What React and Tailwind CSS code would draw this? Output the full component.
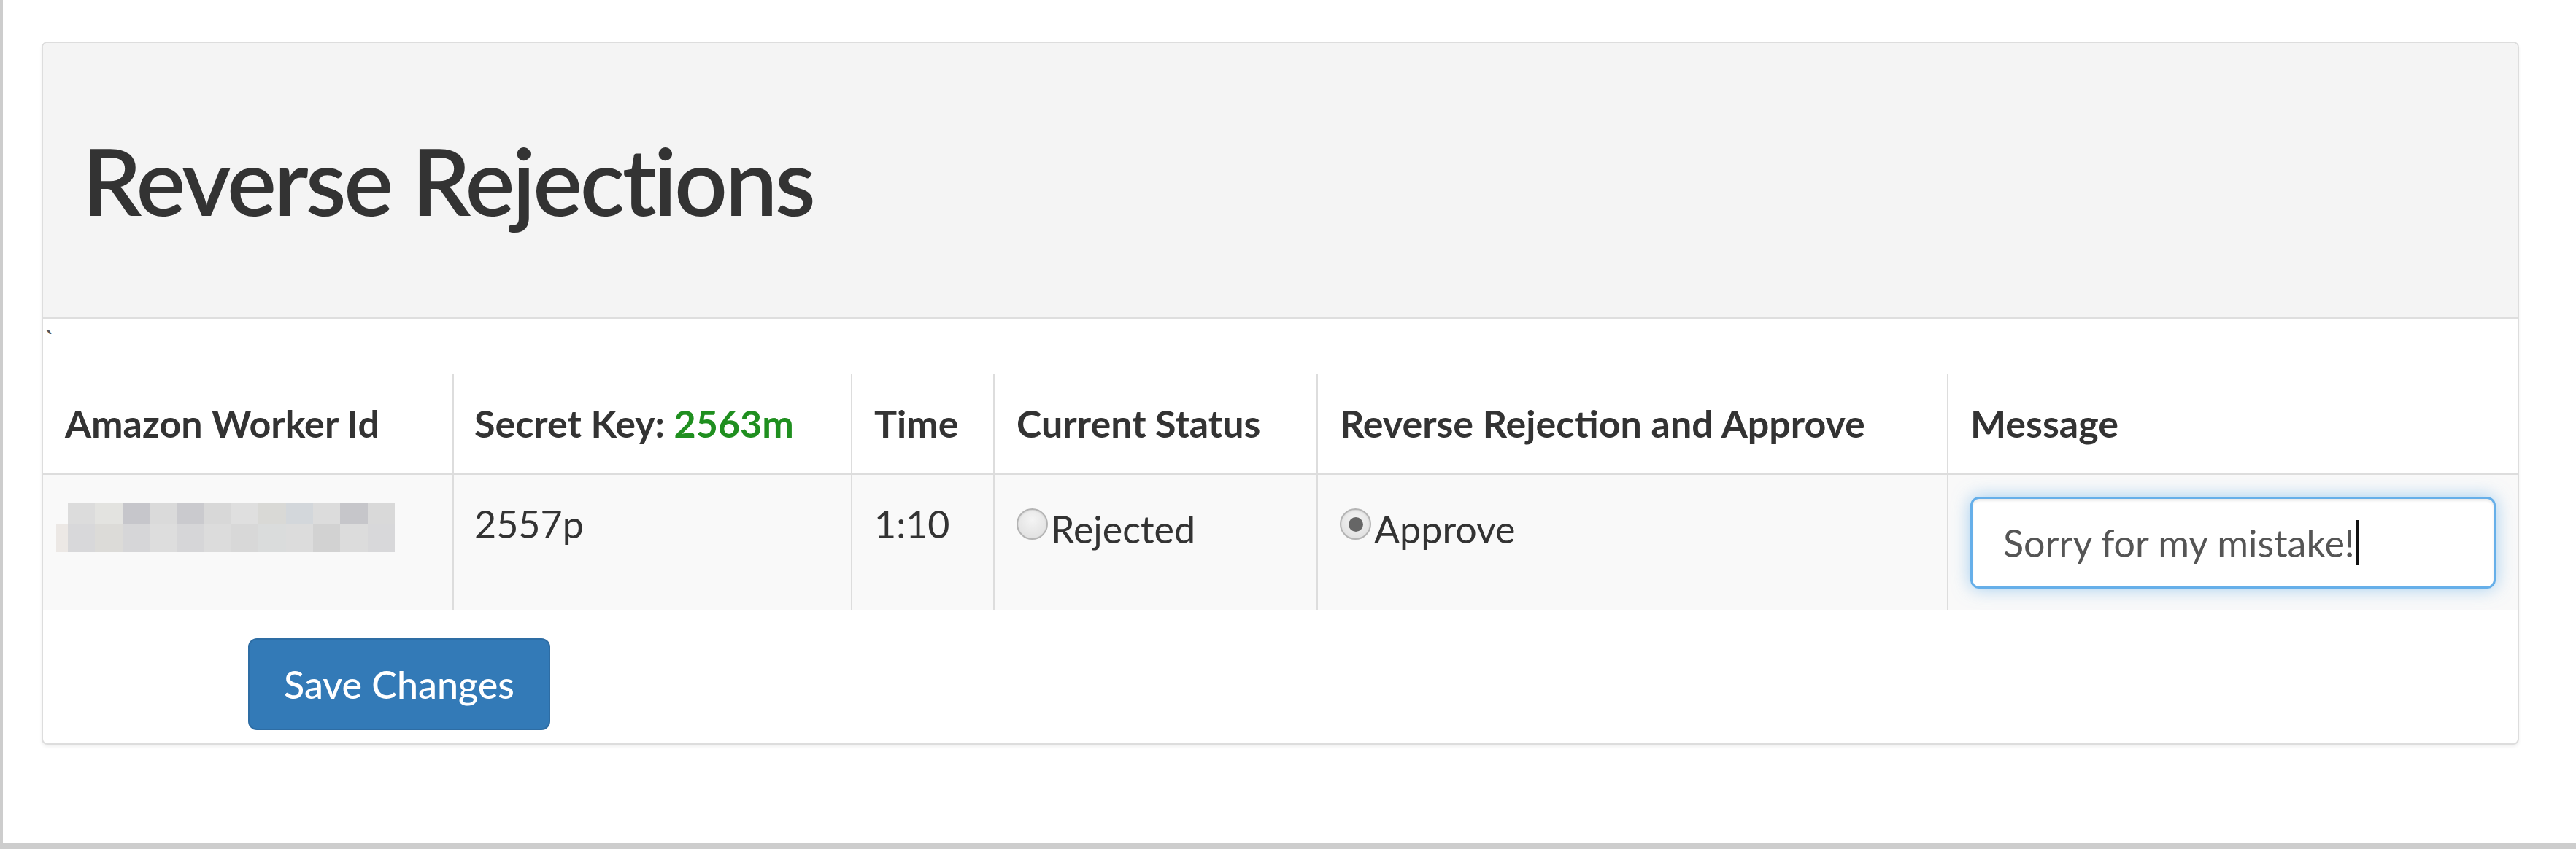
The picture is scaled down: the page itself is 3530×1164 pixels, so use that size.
import React from "react";

const mosaicTop = [
  "#dcdcdc", "#e3e3e0", "#c6c6cb", "#dadada", "#cacace", "#d8d8d8",
  "#dfdfdf", "#d9d9d6", "#d3d7db", "#dcdcdc", "#c6c6ca", "#d9d9d9",
];
const mosaicBottom = [
  "#d8d8da", "#dcdbd8", "#d6d6d8", "#dddddd", "#d6d6d8", "#dcdcdc",
  "#d8d8d8", "#dadcdc", "#dcdcdc", "#d2d2d2", "#dcdcdc", "#d8d8da",
];

function Radio({ checked }) {
  return (
    <span className="mt-[16px] flex h-[43px] w-[43px] shrink-0 items-center justify-center rounded-full border-2 border-[#b4b4b4] bg-[radial-gradient(circle_at_50%_35%,#f4f4f4_0%,#dcdcdc_100%)] shadow-[inset_0_1px_2px_rgba(0,0,0,0.1)]">
      {checked && <span className="h-[20px] w-[20px] rounded-full bg-[#666]" />}
    </span>
  );
}

export default function App() {
  return (
    <div className="box-border h-[1164px] w-full overflow-hidden border-b-8 border-l-4 border-[#cdcdcd] bg-white font-['Lato','Liberation_Sans',sans-serif] text-[#333]">
      <div className="ml-[53px] mr-[78px] mt-[57px] overflow-hidden rounded-[8px] border-2 border-[#dddddd] bg-white shadow-[0_3px_4px_rgba(0,0,0,0.06)]">
        <div className="flex h-[378px] items-center border-b-[3px] border-[#dedede] bg-[#f4f4f4] pl-[54px]">
          <h1 className="text-[128px] font-semibold leading-none tracking-[-3.5px]">
            Reverse Rejections
          </h1>
        </div>

        <div className="h-[76px] pl-[2px] pt-[10px] text-[36px] leading-none text-[#555]">`</div>

        <table className="w-full table-fixed border-collapse text-[52px] leading-[75px]">
          <thead>
            <tr className="border-b-[3px] border-[#dddddd]">
              <th className="w-[562px] px-[30px] py-[30px] text-left align-bottom font-bold">
                Amazon Worker Id
              </th>
              <th className="w-[546px] border-l-2 border-[#dddddd] px-[28px] py-[30px] text-left align-bottom font-bold">
                Secret Key: <span className="text-[#1f8f1f]">2563m</span>
              </th>
              <th className="w-[195px] border-l-2 border-[#dddddd] px-[30px] py-[30px] text-left align-bottom font-bold">
                Time
              </th>
              <th className="w-[443px] border-l-2 border-[#dddddd] px-[30px] py-[30px] text-left align-bottom font-bold">
                Current Status
              </th>
              <th className="w-[864px] border-l-2 border-[#dddddd] px-[30px] py-[30px] text-left align-bottom font-bold">
                Reverse Rejection and Approve
              </th>
              <th className="border-l-2 border-[#dddddd] px-[30px] py-[30px] text-left align-bottom font-bold">
                Message
              </th>
            </tr>
          </thead>
          <tbody>
            <tr className="bg-[#f9f9f9]">
              <td className="px-[30px] py-[30px] align-top">
                <div className="-ml-[12px] mt-[9px] flex w-[464px] flex-col">
                  <div className="ml-[16px] flex h-[28px]">
                    {mosaicTop.map((c, i) => (
                      <span key={i} className="h-full flex-1" style={{ backgroundColor: c }} />
                    ))}
                  </div>
                  <div className="flex h-[39px]">
                    <span className="h-full w-[16px] bg-[#ece8e5]" />
                    {mosaicBottom.map((c, i) => (
                      <span key={i} className="h-full flex-1" style={{ backgroundColor: c }} />
                    ))}
                  </div>
                </div>
              </td>
              <td className="border-l-2 border-[#dddddd] px-[28px] py-[30px] align-top">2557p</td>
              <td className="border-l-2 border-[#dddddd] px-[30px] py-[30px] align-top">1:10</td>
              <td className="border-l-2 border-[#dddddd] px-[30px] py-[30px] align-top">
                <label className="flex items-start">
                  <Radio />
                  <span className="pl-[4px] pt-[7px]">Rejected</span>
                </label>
              </td>
              <td className="border-l-2 border-[#dddddd] px-[30px] py-[30px] align-top">
                <label className="flex items-start">
                  <Radio checked />
                  <span className="pl-[4px] pt-[7px]">Approve</span>
                </label>
              </td>
              <td className="border-l-2 border-[#dddddd] px-[30px] py-[30px] align-top">
                <div className="flex h-[126px] w-full items-center rounded-[12px] border-[3px] border-[#66afe9] bg-white px-[42px] text-[#555] shadow-[inset_0_3px_3px_rgba(0,0,0,0.075),0_0_24px_rgba(102,175,233,0.6)]">
                  <span>Sorry for my mistake!</span>
                  <span className="ml-[2px] h-[62px] w-[3px] bg-[#111]" />
                </div>
              </td>
            </tr>
          </tbody>
        </table>

        <div className="pb-[18px] pl-[281px] pt-[38px]">
          <button className="h-[126px] w-[414px] rounded-[12px] border-2 border-[#2e6da4] bg-[#337ab7] text-[52px] font-medium text-white">
            Save Changes
          </button>
        </div>
      </div>
    </div>
  );
}
